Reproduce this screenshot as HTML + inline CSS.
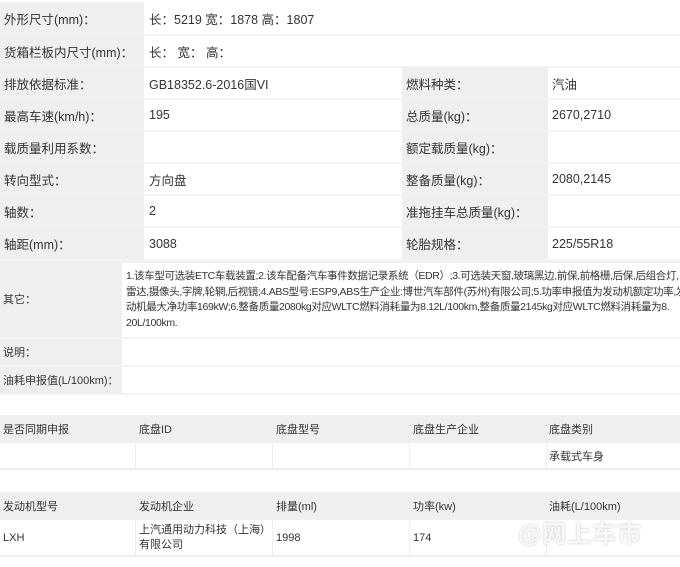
<!DOCTYPE html>
<html><head><meta charset="utf-8"><style>
body{margin:0;width:680px;height:567px;background:#fff;font-family:"Liberation Sans","Noto Sans CJK SC",sans-serif;color:#333;position:relative;overflow:hidden}
.c{position:absolute;box-sizing:border-box;border-bottom:2px solid #f3f3f3;display:flex;align-items:center;font-size:12.5px;padding-left:4px}
.g{background:#efefef}
.w{background:#fff}
.s{font-size:11px}
</style></head><body>
<div class="c g" style="left:0;top:2px;width:144px;height:34px">外形尺寸(mm)：</div>
<div class="c w" style="left:144px;top:2px;width:536px;height:34px;padding-left:5px">长：5219 宽：1878 高：1807</div>
<div class="c g" style="left:0;top:36px;width:144px;height:32px">货箱栏板内尺寸(mm)：</div>
<div class="c w" style="left:144px;top:36px;width:536px;height:32px;padding-left:5px">长：&nbsp;宽：&nbsp;高：</div>

<div class="c g" style="left:0;top:68px;width:144px;height:32px">排放依据标准：</div>
<div class="c w" style="left:144px;top:68px;width:258px;height:32px;padding-left:5px">GB18352.6-2016国VI</div>
<div class="c g" style="left:402px;top:68px;width:146px;height:32px">燃料种类：</div>
<div class="c w" style="left:548px;top:68px;width:132px;height:32px">汽油</div>

<div class="c g" style="left:0;top:100px;width:144px;height:32px">最高车速(km/h)：</div>
<div class="c w" style="left:144px;top:100px;width:258px;height:32px;padding-left:5px">195</div>
<div class="c g" style="left:402px;top:100px;width:146px;height:32px">总质量(kg)：</div>
<div class="c w" style="left:548px;top:100px;width:132px;height:32px">2670,2710</div>

<div class="c g" style="left:0;top:132px;width:144px;height:32px">载质量利用系数：</div>
<div class="c w" style="left:144px;top:132px;width:258px;height:32px"></div>
<div class="c g" style="left:402px;top:132px;width:146px;height:32px">额定载质量(kg)：</div>
<div class="c w" style="left:548px;top:132px;width:132px;height:32px"></div>

<div class="c g" style="left:0;top:164px;width:144px;height:32px">转向型式：</div>
<div class="c w" style="left:144px;top:164px;width:258px;height:32px;padding-left:5px">方向盘</div>
<div class="c g" style="left:402px;top:164px;width:146px;height:32px">整备质量(kg)：</div>
<div class="c w" style="left:548px;top:164px;width:132px;height:32px">2080,2145</div>

<div class="c g" style="left:0;top:196px;width:144px;height:32px">轴数：</div>
<div class="c w" style="left:144px;top:196px;width:258px;height:32px;padding-left:5px">2</div>
<div class="c g" style="left:402px;top:196px;width:146px;height:32px">准拖挂车总质量(kg)：</div>
<div class="c w" style="left:548px;top:196px;width:132px;height:32px"></div>

<div class="c g" style="left:0;top:228px;width:144px;height:33px">轴距(mm)：</div>
<div class="c w" style="left:144px;top:228px;width:258px;height:33px;padding-left:5px">3088</div>
<div class="c g" style="left:402px;top:228px;width:146px;height:33px">轮胎规格：</div>
<div class="c w" style="left:548px;top:228px;width:132px;height:33px">225/55R18</div>

<div class="c g s" style="left:0;top:261px;width:680px;height:78px;padding-left:3px">其它：</div>
<div class="c w s" style="left:122px;top:263px;width:558px;height:74px;border:none;line-height:15.5px;font-size:10.5px;letter-spacing:-0.35px;white-space:nowrap;overflow:hidden">1.该车型可选装ETC车载装置;2.该车配备汽车事件数据记录系统（EDR）;3.可选装天窗,玻璃黑边,前保,前格栅,后保,后组合灯,<br>雷达,摄像头,字牌,轮辋,后视镜;4.ABS型号:ESP9,ABS生产企业:博世汽车部件(苏州)有限公司;5.功率申报值为发动机额定功率,发<br>动机最大净功率169kW;6.整备质量2080kg对应WLTC燃料消耗量为8.12L/100km,整备质量2145kg对应WLTC燃料消耗量为8.<br>20L/100km.</div>

<div class="c g s" style="left:0;top:339px;width:680px;height:28px;padding-left:3px">说明：</div>
<div class="c w" style="left:122px;top:339px;width:558px;height:26px;border:none"></div>
<div class="c g s" style="left:0;top:367px;width:680px;height:28px;padding-left:3px">油耗申报值(L/100km)：</div>
<div class="c w" style="left:122px;top:367px;width:558px;height:26px;border:none"></div>

<div class="c g s" style="left:0;top:415px;width:680px;height:28px;border:none;padding:0">
<span style="position:absolute;left:3px">是否同期申报</span><span style="position:absolute;left:139px">底盘ID</span><span style="position:absolute;left:276px">底盘型号</span><span style="position:absolute;left:413px">底盘生产企业</span><span style="position:absolute;left:549px">底盘类别</span></div>
<div class="c w s" style="left:0;top:443px;width:680px;height:27px;border-bottom:2px solid #eee;padding:0">
<span style="position:absolute;left:549px">承载式车身</span></div>
<div style="position:absolute;top:443px;left:135px;width:1px;height:27px;background:#eee"></div>
<div style="position:absolute;top:443px;left:272px;width:1px;height:27px;background:#eee"></div>
<div style="position:absolute;top:443px;left:409px;width:1px;height:27px;background:#eee"></div>
<div style="position:absolute;top:443px;left:546px;width:1px;height:27px;background:#eee"></div>

<div class="c g s" style="left:0;top:492px;width:680px;height:28px;border:none;padding:0">
<span style="position:absolute;left:3px">发动机型号</span><span style="position:absolute;left:139px">发动机企业</span><span style="position:absolute;left:276px">排量(ml)</span><span style="position:absolute;left:413px">功率(kw)</span><span style="position:absolute;left:549px">油耗(L/100km)</span></div>
<div class="c w s" style="left:0;top:520px;width:680px;height:37px;border-bottom:2px solid #eee;padding:0">
<span style="position:absolute;left:3px">LXH</span><span style="position:absolute;left:139px;line-height:15px">上汽通用动力科技（上海）<br>有限公司</span><span style="position:absolute;left:276px">1998</span><span style="position:absolute;left:413px">174</span></div>
<div style="position:absolute;top:520px;left:135px;width:1px;height:37px;background:#eee"></div>
<div style="position:absolute;top:520px;left:272px;width:1px;height:37px;background:#eee"></div>
<div style="position:absolute;top:520px;left:409px;width:1px;height:37px;background:#eee"></div>
<div style="position:absolute;top:520px;left:546px;width:1px;height:37px;background:#eee"></div>
<div style="position:absolute;left:518px;top:514px;font-size:24px;font-weight:bold;color:rgba(255,255,255,0.85);text-shadow:0 0 2px rgba(0,0,0,0.25);letter-spacing:1px">@网上车市</div>
</body></html>
